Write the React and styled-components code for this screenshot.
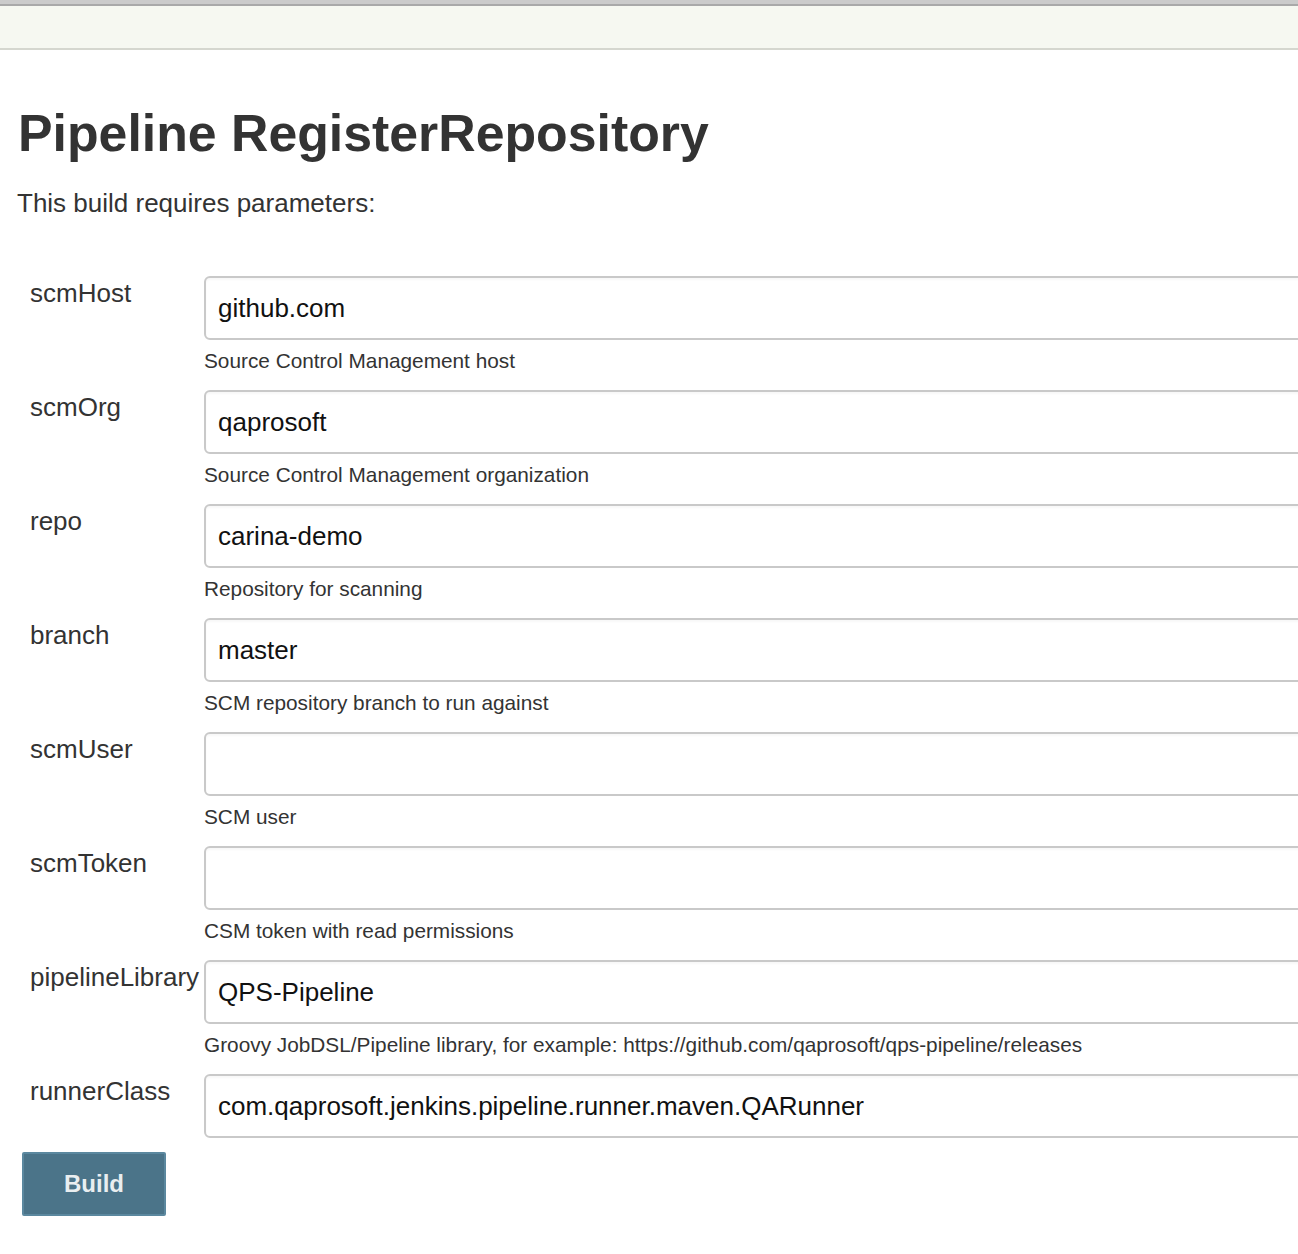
import React from 'react';
import styled, { createGlobalStyle } from 'styled-components';

const GlobalStyle = createGlobalStyle`
  html, body {
    margin: 0;
    padding: 0;
    background: #fff;
    overflow-x: hidden;
  }
  body {
    font-family: "Liberation Sans", Arial, sans-serif;
    color: #333;
  }
`

const TopBar = styled.div`
  height: 4px;
  background: #cbcbcb;
  border-bottom: 2px solid #a9a9a9;
`

const Breadcrumbs = styled.div`
  height: 42px;
  background: #f6f8f1;
  border-bottom: 2px solid #d5d7cf;
`

const Main = styled.main`
  padding: 0 0 40px 18px;
`

const Title = styled.h1`
  margin: 0;
  padding-top: 54px;
  font-size: 51.8px;
  line-height: 58px;
  font-weight: bold;
  color: #333;
`

const Intro = styled.p`
  margin: 26px 0 0 -1px;
  font-size: 26px;
  line-height: 30px;
`

const Form = styled.form`
  margin-top: 58px;
  width: 1400px;
`

const Row = styled.div`
  display: grid;
  grid-template-columns: 186px 1fr;
  margin-bottom: ${p => (p.$last ? '14px' : '17px')};
`

const Label = styled.label`
  padding: 2px 0 0 12px;
  font-size: 26px;
  line-height: 30px;
  color: #333;
  white-space: nowrap;
`

const Field = styled.div`
  display: flex;
  flex-direction: column;
`

const Input = styled.input`
  box-sizing: border-box;
  height: 64px;
  width: 100%;
  margin: 0;
  padding: 0 12px;
  border: 2px solid #c9c9c9;
  border-radius: 6px;
  font-family: "Liberation Sans", Arial, sans-serif;
  font-size: 26px;
  color: #111;
  background: #fff;
  box-shadow: inset 0 2px 2px rgba(0, 0, 0, 0.03);
  outline: none;
`

const Description = styled.div`
  margin-top: 9px;
  font-size: 20.8px;
  line-height: 24px;
  color: #333;
`

const BuildButton = styled.button`
  margin-left: 4px;
  width: 144px;
  height: 64px;
  background: #4b7489;
  border: 2px solid #5b889f;
  border-radius: 2px;
  color: #e9eef0;
  font-family: "Liberation Sans", Arial, sans-serif;
  font-size: 24px;
  font-weight: bold;
  cursor: pointer;
`

const params = [
  { name: 'scmHost', value: 'github.com', desc: 'Source Control Management host' },
  { name: 'scmOrg', value: 'qaprosoft', desc: 'Source Control Management organization' },
  { name: 'repo', value: 'carina-demo', desc: 'Repository for scanning' },
  { name: 'branch', value: 'master', desc: 'SCM repository branch to run against' },
  { name: 'scmUser', value: '', desc: 'SCM user' },
  { name: 'scmToken', value: '', desc: 'CSM token with read permissions' },
  {
    name: 'pipelineLibrary',
    value: 'QPS-Pipeline',
    desc: 'Groovy JobDSL/Pipeline library, for example: https://github.com/qaprosoft/qps-pipeline/releases',
  },
  { name: 'runnerClass', value: 'com.qaprosoft.jenkins.pipeline.runner.maven.QARunner' },
];

export default function App() {
  return (
    <>
      <GlobalStyle />
      <TopBar />
      <Breadcrumbs />
      <Main>
        <Title>Pipeline RegisterRepository</Title>
        <Intro>This build requires parameters:</Intro>
        <Form onSubmit={e => e.preventDefault()}>
          {params.map((p, i) => (
            <Row key={p.name} $last={i === params.length - 1}>
              <Label htmlFor={p.name}>{p.name}</Label>
              <Field>
                <Input id={p.name} type="text" defaultValue={p.value} />
                {p.desc && <Description>{p.desc}</Description>}
              </Field>
            </Row>
          ))}
          <BuildButton type="submit">Build</BuildButton>
        </Form>
      </Main>
    </>
  );
}
